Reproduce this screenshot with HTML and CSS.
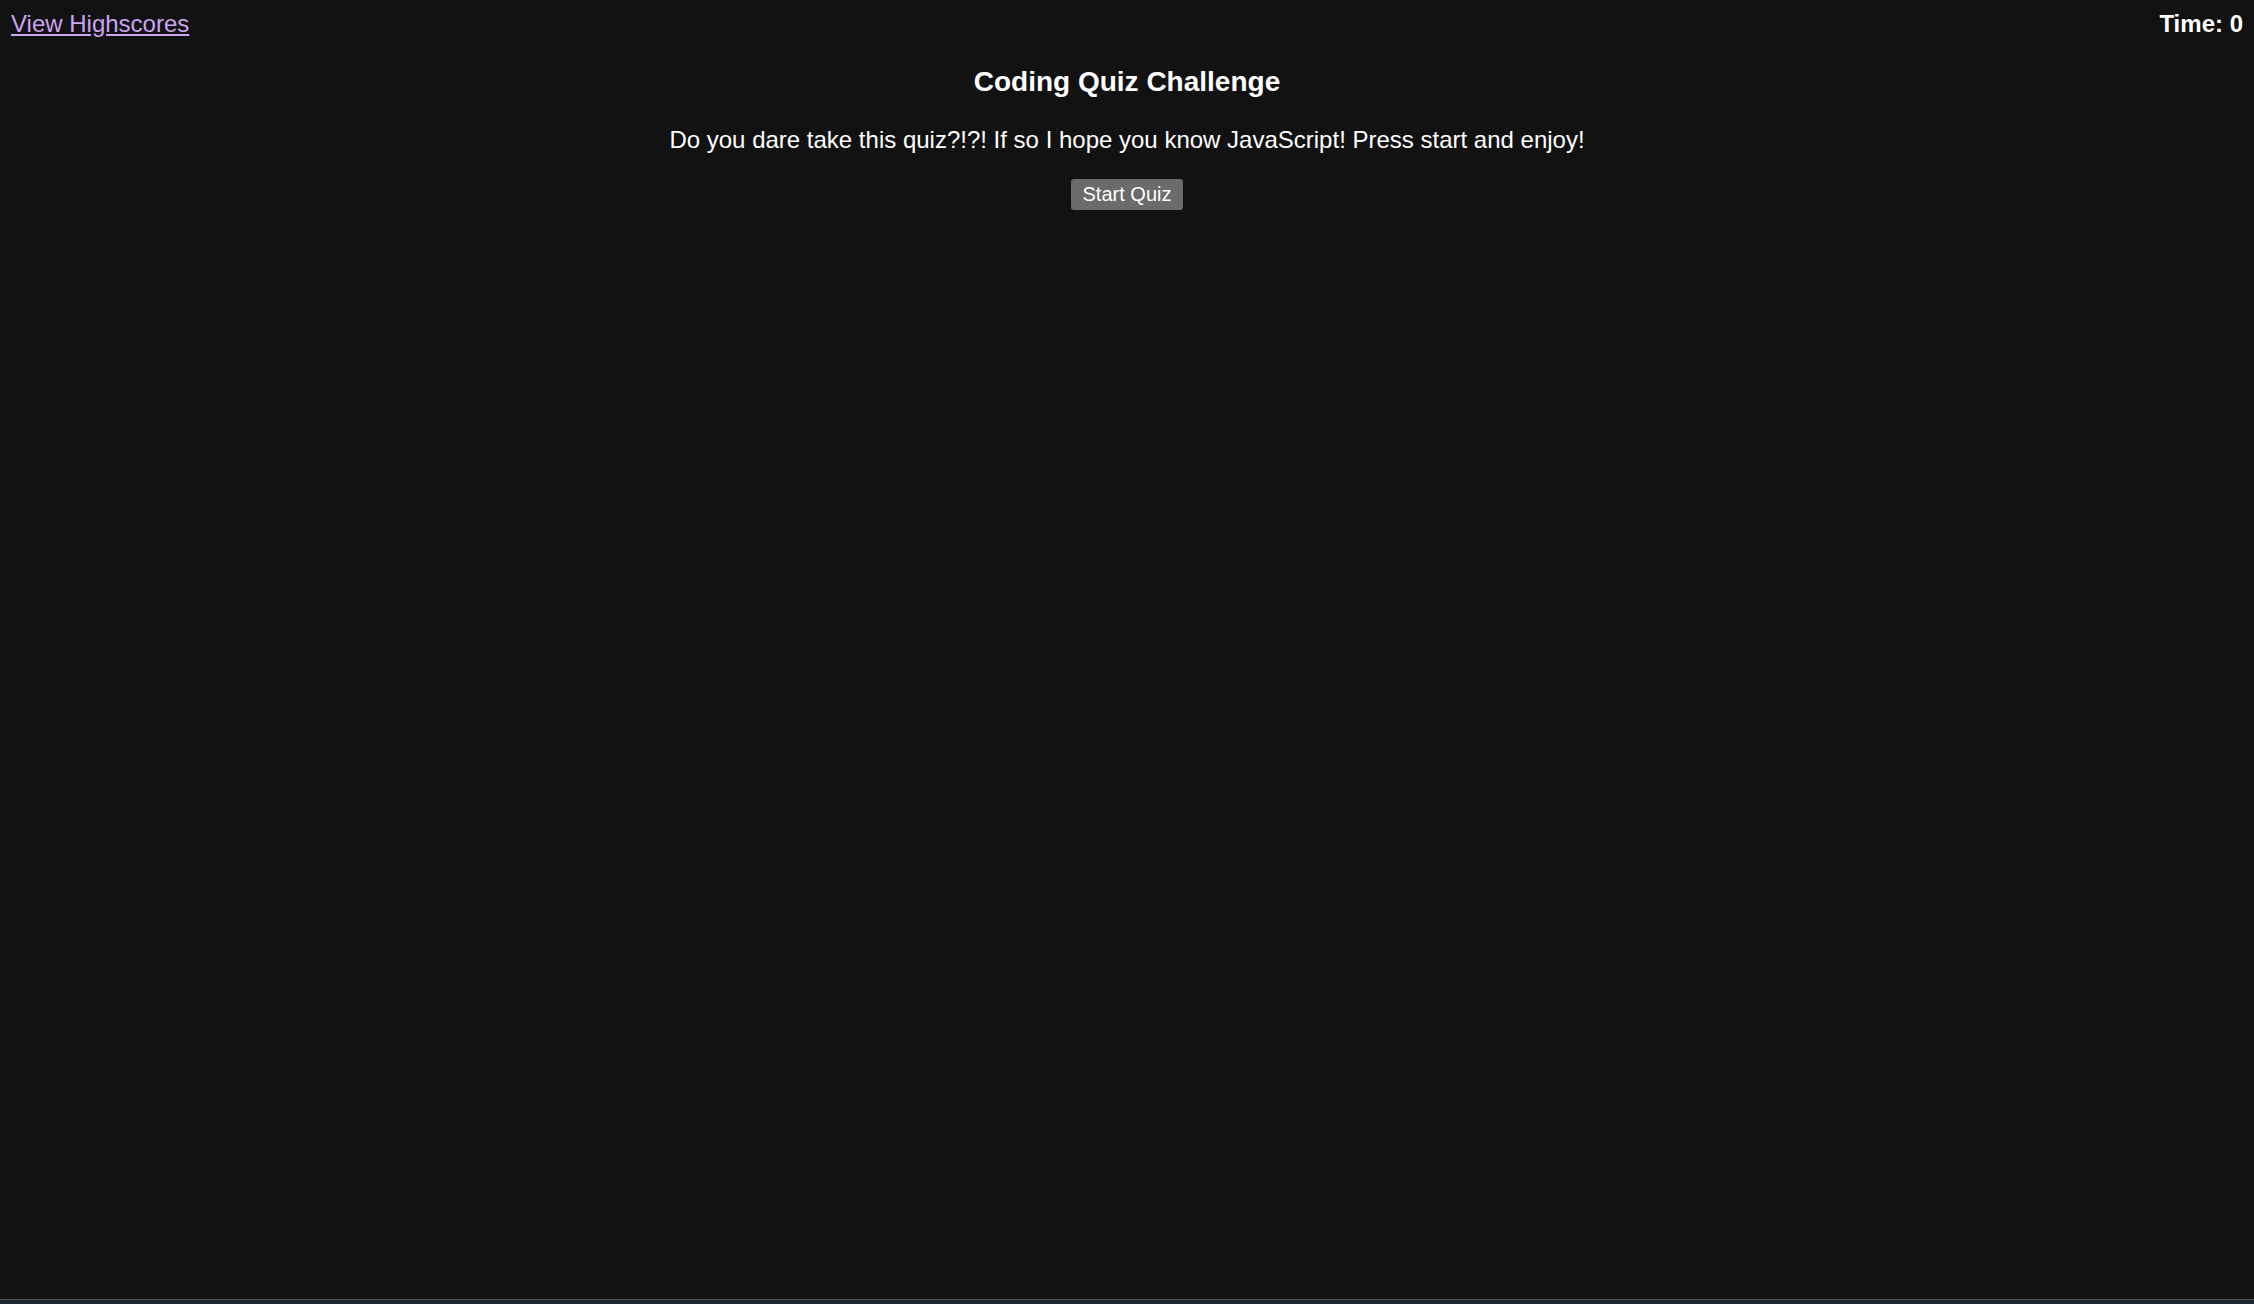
FILE: index.html
```html
<!DOCTYPE html>
<html lang="en">
<head>
<meta charset="utf-8">
<title>Coding Quiz Challenge</title>
<link rel="stylesheet" href="styles.css">
</head>
<body>
<header class="topbar">
  <a class="scores-link" href="#">View Highscores</a>
  <div class="timer">Time: <span>0</span></div>
</header>
<main class="intro">
  <h3 class="title">Coding Quiz Challenge</h3>
  <p class="lead">Do you dare take this quiz?!?! If so I hope you know JavaScript! Press start and enjoy!</p>
  <button class="start-btn" type="button">Start Quiz</button>
</main>
<div class="bottom-bar"></div>
</body>
</html>
```
FILE: styles.css
```css
html, body {
  height: 100%;
}
body {
  margin: 0;
  background: #121212;
  color: #ffffff;
  font-family: "Liberation Sans", Arial, sans-serif;
  font-size: 24px;
  display: flex;
  flex-direction: column;
  min-height: 100vh;
  box-sizing: border-box;
}
.topbar {
  display: flex;
  justify-content: space-between;
  align-items: flex-start;
  padding: 10px 11px 0 11px;
  line-height: 28px;
}
.scores-link {
  color: #cca4f2;
  text-decoration: underline;
}
.timer {
  font-weight: bold;
}
.intro {
  flex: 1;
  display: flex;
  flex-direction: column;
  align-items: center;
  text-align: center;
}
.title {
  margin: 28px 0 0 0;
  font-size: 28px;
  font-weight: bold;
  line-height: normal;
}
.lead {
  margin: 28px 0 0 0;
  line-height: 28px;
}
.start-btn {
  margin-top: 25px;
  background: #6b6b6b;
  color: #ffffff;
  border: none;
  border-radius: 3px;
  font-family: "Liberation Sans", Arial, sans-serif;
  font-size: 20px;
  line-height: 23px;
  padding: 4px 12px;
  height: 31px;
}
.bottom-bar {
  height: 4px;
  border-top: 1px solid #4b4f56;
  background: #1f252d;
}
```
